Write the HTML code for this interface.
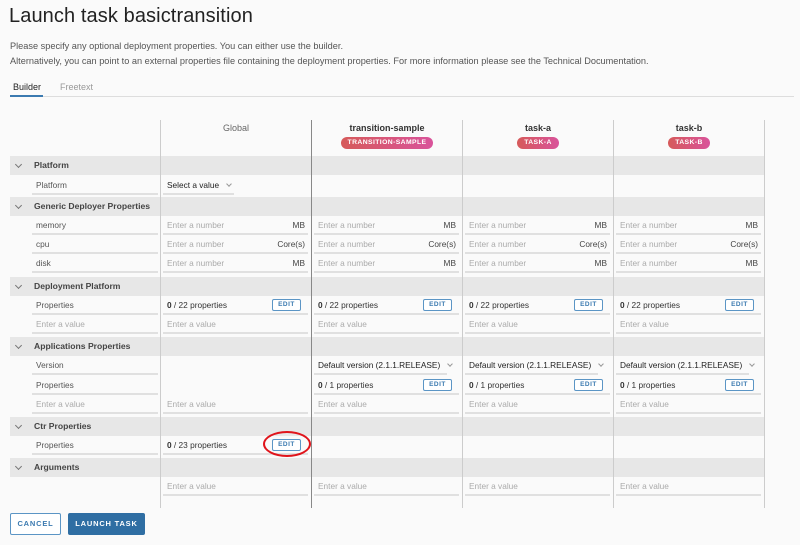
<!DOCTYPE html>
<html><head><meta charset="utf-8">
<style>
*{margin:0;padding:0;box-sizing:border-box}
body{width:800px;height:545px;background:#fafafa;font-family:"Liberation Sans",sans-serif;color:#333;position:relative;overflow:hidden}
.a{position:absolute}
h1{position:absolute;left:9px;top:5px;font-size:20px;font-weight:normal;color:#222;letter-spacing:0.1px}
.p{position:absolute;left:10px;font-size:9.2px;color:#555}
.vl{position:absolute;top:120px;height:388px;width:1px;background:#ccc}
.sec{position:absolute;left:10px;width:754px;height:19px;background:#e7e7e7;font-size:8.6px;font-weight:bold;color:#444;line-height:19px;padding-left:24px}
.sec:before{content:"";position:absolute;left:6px;top:6px;width:4px;height:4px;border-right:1px solid #777;border-bottom:1px solid #777;transform:rotate(45deg)}
.c{position:absolute;height:19px;border-bottom:2px solid #e0e0e0;font-size:8.3px;line-height:19px;padding-left:4px;color:#333;white-space:nowrap}
.l{width:126px;color:#555}
.v{width:145px}
.ph{color:#aaa}
.u{position:absolute;right:3px;top:0;color:#444}
.e{position:absolute;right:7px;top:3px;width:29px;height:12px;border:1px solid #5b95c5;border-radius:2px;font-size:6.5px;line-height:10px;text-align:center;color:#3b7ab0;font-weight:bold;letter-spacing:.5px;background:#fff}
.dd:after{content:"";display:inline-block;margin-left:8px;width:3px;height:3px;border-right:1px solid #999;border-bottom:1px solid #999;transform:rotate(45deg);position:relative;top:-2px}
.hd{position:absolute;top:123px;width:150px;text-align:center;font-size:9px;font-weight:bold;color:#333}
.bd{display:inline-block;margin-top:4px;height:12px;border-radius:6px;background:linear-gradient(90deg,#d65a5a,#d9539b);color:#fff;font-size:6.8px;line-height:12px;padding:0 7px;letter-spacing:.4px;font-weight:bold}
b{font-weight:bold}
</style></head><body>
<h1>Launch task basictransition</h1>
<div class="p" style="top:41px">Please specify any optional deployment properties. You can either use the builder.</div>
<div class="p" style="top:56px">Alternatively, you can point to an external properties file containing the deployment properties. For more information please see the Technical Documentation.</div>
<div class="a" style="left:13px;top:82px;font-size:9px;color:#222">Builder</div>
<div class="a" style="left:60px;top:82px;font-size:9px;color:#999">Freetext</div>
<div class="a" style="left:10px;top:96px;width:784px;height:1px;background:#ddd"></div>
<div class="a" style="left:10px;top:95px;width:33px;height:2px;background:#3b7ab0"></div>

<div class="sec" style="top:156px">Platform</div>
<div class="sec" style="top:197px">Generic Deployer Properties</div>
<div class="sec" style="top:277px">Deployment Platform</div>
<div class="sec" style="top:337px">Applications Properties</div>
<div class="sec" style="top:417px">Ctr Properties</div>
<div class="sec" style="top:458px">Arguments</div>

<div class="vl" style="left:160px"></div>
<div class="vl" style="left:311px;background:#888"></div>
<div class="vl" style="left:462px"></div>
<div class="vl" style="left:613px"></div>
<div class="vl" style="left:764px"></div>

<div class="hd" style="left:161px;font-weight:normal;color:#666">Global</div>
<div class="hd" style="left:312px">transition-sample<br><span class="bd">TRANSITION-SAMPLE</span></div>
<div class="hd" style="left:463px">task-a<br><span class="bd">TASK-A</span></div>
<div class="hd" style="left:614px">task-b<br><span class="bd">TASK-B</span></div>

<div class="c l" style="left:32px;top:176px">Platform</div>
<div class="c dd" style="left:163px;top:176px;width:71px;color:#222">Select a value</div>

<div class="c l" style="left:32px;top:216px">memory</div>
<div class="c l" style="left:32px;top:235px">cpu</div>
<div class="c l" style="left:32px;top:254px">disk</div>
<div class="c v ph" style="left:163px;top:216px">Enter a number<span class="u">MB</span></div>
<div class="c v ph" style="left:163px;top:235px">Enter a number<span class="u">Core(s)</span></div>
<div class="c v ph" style="left:163px;top:254px">Enter a number<span class="u">MB</span></div>
<div class="c v ph" style="left:314px;top:216px">Enter a number<span class="u">MB</span></div>
<div class="c v ph" style="left:314px;top:235px">Enter a number<span class="u">Core(s)</span></div>
<div class="c v ph" style="left:314px;top:254px">Enter a number<span class="u">MB</span></div>
<div class="c v ph" style="left:465px;top:216px">Enter a number<span class="u">MB</span></div>
<div class="c v ph" style="left:465px;top:235px">Enter a number<span class="u">Core(s)</span></div>
<div class="c v ph" style="left:465px;top:254px">Enter a number<span class="u">MB</span></div>
<div class="c v ph" style="left:616px;top:216px">Enter a number<span class="u">MB</span></div>
<div class="c v ph" style="left:616px;top:235px">Enter a number<span class="u">Core(s)</span></div>
<div class="c v ph" style="left:616px;top:254px">Enter a number<span class="u">MB</span></div>

<div class="c l" style="left:32px;top:296px">Properties</div>
<div class="c l ph" style="left:32px;top:315px">Enter a value</div>
<div class="c v" style="left:163px;top:296px"><b>0</b> / 22 properties<span class="e">EDIT</span></div>
<div class="c v" style="left:314px;top:296px"><b>0</b> / 22 properties<span class="e">EDIT</span></div>
<div class="c v" style="left:465px;top:296px"><b>0</b> / 22 properties<span class="e">EDIT</span></div>
<div class="c v" style="left:616px;top:296px"><b>0</b> / 22 properties<span class="e">EDIT</span></div>
<div class="c v ph" style="left:163px;top:315px">Enter a value</div>
<div class="c v ph" style="left:314px;top:315px">Enter a value</div>
<div class="c v ph" style="left:465px;top:315px">Enter a value</div>
<div class="c v ph" style="left:616px;top:315px">Enter a value</div>

<div class="c l" style="left:32px;top:356px">Version</div>
<div class="c l" style="left:32px;top:376px">Properties</div>
<div class="c l ph" style="left:32px;top:395px">Enter a value</div>
<div class="c dd" style="left:314px;top:356px;width:133px;color:#222">Default version (2.1.1.RELEASE)</div>
<div class="c dd" style="left:465px;top:356px;width:133px;color:#222">Default version (2.1.1.RELEASE)</div>
<div class="c dd" style="left:616px;top:356px;width:133px;color:#222">Default version (2.1.1.RELEASE)</div>
<div class="c v" style="left:314px;top:376px"><b>0</b> / 1 properties<span class="e">EDIT</span></div>
<div class="c v" style="left:465px;top:376px"><b>0</b> / 1 properties<span class="e">EDIT</span></div>
<div class="c v" style="left:616px;top:376px"><b>0</b> / 1 properties<span class="e">EDIT</span></div>
<div class="c v ph" style="left:163px;top:395px">Enter a value</div>
<div class="c v ph" style="left:314px;top:395px">Enter a value</div>
<div class="c v ph" style="left:465px;top:395px">Enter a value</div>
<div class="c v ph" style="left:616px;top:395px">Enter a value</div>

<div class="c l" style="left:32px;top:436px">Properties</div>
<div class="c v" style="left:163px;top:436px"><b>0</b> / 23 properties<span class="e">EDIT</span></div>
<div class="a" style="left:263px;top:431px;width:48px;height:26px;border:2px solid #e0141b;border-radius:50%"></div>

<div class="c v ph" style="left:163px;top:477px">Enter a value</div>
<div class="c v ph" style="left:314px;top:477px">Enter a value</div>
<div class="c v ph" style="left:465px;top:477px">Enter a value</div>
<div class="c v ph" style="left:616px;top:477px">Enter a value</div>

<div class="a" style="left:10px;top:513px;width:51px;height:22px;border:1px solid #5b95c5;border-radius:2px;background:#fff;color:#3b7ab0;font-size:7.5px;font-weight:bold;letter-spacing:.8px;line-height:20px;text-align:center">CANCEL</div>
<div class="a" style="left:68px;top:513px;width:77px;height:22px;border-radius:2px;background:#2f6ea3;color:#fff;font-size:7.5px;font-weight:bold;letter-spacing:.8px;line-height:22px;text-align:center">LAUNCH TASK</div>
</body></html>
